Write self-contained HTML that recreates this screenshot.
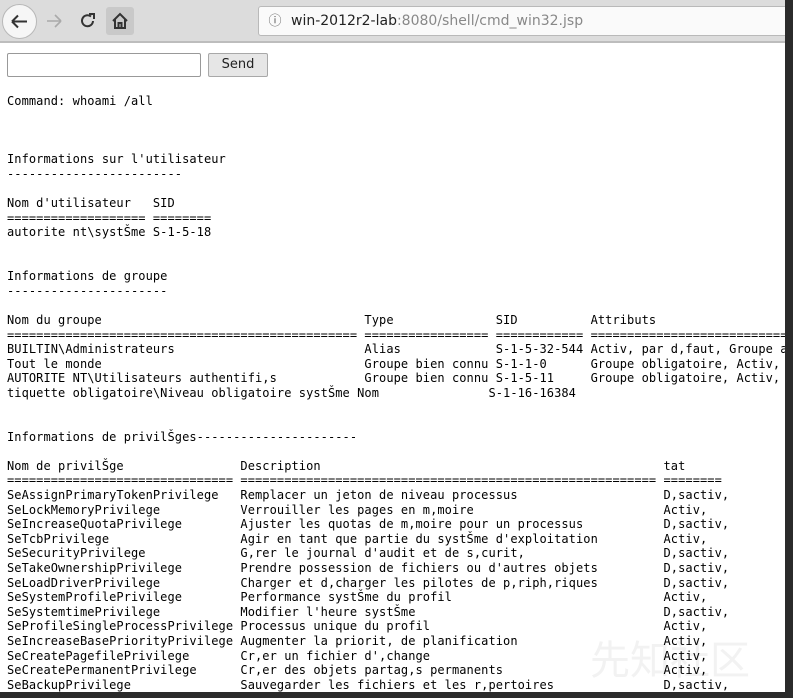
<!DOCTYPE html>
<html><head><meta charset="utf-8"><style>
html,body{margin:0;padding:0;width:793px;height:698px;overflow:hidden;background:#2b2b2b;}
#page{position:absolute;left:0;top:0;width:785px;height:692px;background:#fff;overflow:hidden;}
#bar{position:absolute;left:0;top:0;width:785px;height:41px;background:#dcdcdc;border-bottom:2px solid #bdbdbd;}
#back{position:absolute;left:2px;top:4px;width:33px;height:33px;border-radius:50%;background:#f6f6f6;border:1px solid #b8b8b8;}
#home{position:absolute;left:106px;top:7px;width:28px;height:28px;background:#c9c9c9;border-radius:3px;}
#url{position:absolute;left:258px;top:6px;width:540px;height:28px;background:#fafafa;border:1px solid #b9b9b9;border-radius:3px;font:14px "DejaVu Sans",sans-serif;line-height:28px;color:#222;}
#inp{position:absolute;left:7px;top:53px;width:192px;height:22px;border:1px solid #999;border-radius:2px;background:#fff;}
#btn{position:absolute;left:208px;top:53px;width:58px;height:22px;border:1px solid #a8a8a8;border-radius:2px;background:#e6e6e6;font:13px "DejaVu Sans",sans-serif;text-align:center;line-height:22px;color:#222;}
pre{position:absolute;left:7px;top:94px;margin:0;font:12px "DejaVu Sans Mono",monospace;letter-spacing:0.07px;line-height:14.6px;color:#000;white-space:pre;}
</style></head><body><div id="page">
<div style="position:absolute;left:590px;top:628px;font:40px 'Noto Sans CJK SC',sans-serif;color:#f2f2f2">先知社区</div>
<div id="bar">
<div id="back"><svg width="33" height="33" viewBox="0 0 33 33"><path d="M9 16.5H24M9 16.5L15 10.5M9 16.5L15 22.5" stroke="#333" stroke-width="2" fill="none"/></svg></div>
<svg style="position:absolute;left:44px;top:11px" width="20" height="20" viewBox="0 0 20 20"><path d="M3 10H17M17 10L11 4M17 10L11 16" stroke="#aaa" stroke-width="1.6" fill="none"/></svg>
<svg style="position:absolute;left:78px;top:11px" width="20" height="20" viewBox="0 0 20 20"><path d="M15 10A5.5 5.5 0 1 1 13 5.5" stroke="#333" stroke-width="2" fill="none"/><path d="M11 3H16V8" stroke="#333" stroke-width="2" fill="none"/></svg>
<div id="home"><svg width="28" height="28" viewBox="0 0 28 28"><path d="M7 14L14 7L21 14M9 12V21H19V12M12.5 21V16H15.5V21" stroke="#333" stroke-width="2" fill="none"/></svg></div>
<div id="url"><span style="display:inline-block;width:32px;text-align:center;color:#555;font-size:13px">ⓘ</span>win-2012r2-lab<span style="color:#888">:8080/shell/cmd_win32.jsp</span></div>
</div>
<div id="inp"></div><div id="btn">Send</div>
<pre>Command: whoami /all



Informations sur l'utilisateur
------------------------

Nom d'utilisateur   SID
=================== ========
autorite nt\systŠme S-1-5-18


Informations de groupe
----------------------

Nom du groupe                                    Type              SID          Attributs
================================================ ================= ============ ==================================
BUILTIN\Administrateurs                          Alias             S-1-5-32-544 Activ, par d,faut, Groupe activ, Propriétaire du groupe
Tout le monde                                    Groupe bien connu S-1-1-0      Groupe obligatoire, Activ, par d,faut
AUTORITE NT\Utilisateurs authentifi,s            Groupe bien connu S-1-5-11     Groupe obligatoire, Activ, par d,faut
tiquette obligatoire\Niveau obligatoire systŠme Nom               S-1-16-16384


Informations de privilŠges----------------------

Nom de privilŠge                Description                                               tat
=============================== ========================================================= ========
SeAssignPrimaryTokenPrivilege   Remplacer un jeton de niveau processus                    D,sactiv,
SeLockMemoryPrivilege           Verrouiller les pages en m,moire                          Activ,
SeIncreaseQuotaPrivilege        Ajuster les quotas de m,moire pour un processus           D,sactiv,
SeTcbPrivilege                  Agir en tant que partie du systŠme d'exploitation         Activ,
SeSecurityPrivilege             G,rer le journal d'audit et de s,curit,                   D,sactiv,
SeTakeOwnershipPrivilege        Prendre possession de fichiers ou d'autres objets         D,sactiv,
SeLoadDriverPrivilege           Charger et d,charger les pilotes de p,riph,riques         D,sactiv,
SeSystemProfilePrivilege        Performance systŠme du profil                             Activ,
SeSystemtimePrivilege           Modifier l'heure systŠme                                  D,sactiv,
SeProfileSingleProcessPrivilege Processus unique du profil                                Activ,
SeIncreaseBasePriorityPrivilege Augmenter la priorit, de planification                    Activ,
SeCreatePagefilePrivilege       Cr,er un fichier d',change                                Activ,
SeCreatePermanentPrivilege      Cr,er des objets partag,s permanents                      Activ,
SeBackupPrivilege               Sauvegarder les fichiers et les r,pertoires               D,sactiv,</pre>
</div></body></html>
